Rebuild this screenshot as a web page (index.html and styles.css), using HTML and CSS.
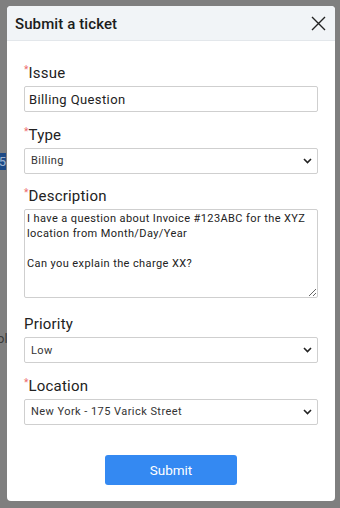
FILE: index.html
```html
<!DOCTYPE html>
<html lang="en">

<head>
    <meta charset="UTF-8">
    <meta name="viewport" content="width=device-width, initial-scale=1.0">
    <link rel="stylesheet" href="styles.css">
    <title>Submit a ticket</title>
</head>

<body>

    <div class="backdrop">
        <span class="bg_badge">5</span>
        <span class="bg_text">ol</span>
    </div>

    <div class="modal">
        <header class="modal_header">
            <h2 class="modal_title">Submit a ticket</h2>
            <button class="close_btn" aria-label="Close">
                <svg width="15" height="15" viewBox="0 0 15 15">
                    <path d="M1 1 L14 14 M14 1 L1 14" stroke="#222" stroke-width="1.4" fill="none" />
                </svg>
            </button>
        </header>

        <form class="modal_body">
            <div class="field">
                <label class="label"><i class="req">*</i>Issue</label>
                <input class="input" type="text" value="Billing Question">
            </div>

            <div class="field">
                <label class="label"><i class="req">*</i>Type</label>
                <div class="select_wrap">
                    <select class="select">
                        <option>Billing</option>
                    </select>
                    <svg class="chevron" width="9" height="6" viewBox="0 0 9 6">
                        <path d="M1 1 L4.5 4.5 L8 1" stroke="#222" stroke-width="1.6" fill="none" />
                    </svg>
                </div>
            </div>

            <div class="field">
                <label class="label"><i class="req">*</i>Description</label>
                <textarea class="textarea">I have a question about Invoice #123ABC for the XYZ location from Month/Day/Year

Can you explain the charge XX?</textarea>
            </div>

            <div class="field">
                <label class="label">Priority</label>
                <div class="select_wrap">
                    <select class="select">
                        <option>Low</option>
                    </select>
                    <svg class="chevron" width="9" height="6" viewBox="0 0 9 6">
                        <path d="M1 1 L4.5 4.5 L8 1" stroke="#222" stroke-width="1.6" fill="none" />
                    </svg>
                </div>
            </div>

            <div class="field">
                <label class="label"><i class="req">*</i>Location</label>
                <div class="select_wrap">
                    <select class="select">
                        <option>New York - 175 Varick Street</option>
                    </select>
                    <svg class="chevron" width="9" height="6" viewBox="0 0 9 6">
                        <path d="M1 1 L4.5 4.5 L8 1" stroke="#222" stroke-width="1.6" fill="none" />
                    </svg>
                </div>
            </div>

            <div class="actions">
                <button type="button" class="submit_btn">Submit</button>
            </div>
        </form>
    </div>

</body>

</html>
```

FILE: styles.css
```css
* {
    margin: 0px;
    padding: 0px;
    box-sizing: border-box;
}

body {
    width: 340px;
    height: 508px;
    background: #7f7f7f;
    font-family: Roboto, "Liberation Sans", sans-serif;
    color: #222222;
    position: relative;
    overflow: hidden;
    padding: 6px 5px 0px 7px;
}

.backdrop {
    position: absolute;
    left: 0px;
    top: 0px;
    width: 7px;
    height: 100%;
}

.bg_badge {
    position: absolute;
    left: -4px;
    top: 153px;
    width: 10px;
    height: 17px;
    background: #1d4a86;
    color: #9fb3cf;
    font-size: 13px;
    line-height: 17px;
    text-align: right;
}

.bg_text {
    position: absolute;
    left: -3px;
    top: 331px;
    color: #3a3a3a;
    font-size: 13px;
}

.modal {
    width: 328px;
    height: 495px;
    background: #ffffff;
    border-radius: 4px;
    overflow: hidden;
    position: relative;
}

.modal_header {
    height: 35px;
    background: #f1f4f7;
    border-bottom: 1px solid #e3e7eb;
    display: flex;
    align-items: center;
    justify-content: space-between;
    padding: 1px 9px 0px 8px;
}

.modal_title {
    font-size: 15px;
    font-weight: 500;
    color: #1c1c1c;
    letter-spacing: 0.1px;
}

.close_btn {
    border: none;
    background: none;
    width: 15px;
    height: 15px;
    display: flex;
}

.modal_body {
    display: flex;
    flex-direction: column;
    padding: 22px 17px 0px 17px;
    gap: 12.5px;
}

.field {
    display: flex;
    flex-direction: column;
    gap: 3px;
}

.label {
    font-size: 15px;
    line-height: 19px;
    padding-top: 1px;
    color: #222222;
    letter-spacing: 0.2px;
}

.req {
    font-style: normal;
    color: #ec6b6b;
    font-size: 10px;
    vertical-align: top;
    line-height: 12px;
}

.input {
    height: 26px;
    border: 1px solid #cfcfcf;
    border-radius: 2px;
    padding: 0px 4px;
    font-family: Roboto, "Liberation Sans", sans-serif;
    font-size: 13px;
    letter-spacing: 0.4px;
    color: #222222;
}

.select_wrap {
    position: relative;
    display: flex;
}

.select {
    appearance: none;
    -webkit-appearance: none;
    width: 100%;
    height: 26px;
    border: 1px solid #cfcfcf;
    border-radius: 2px;
    background: #ffffff;
    padding: 0px 6px;
    font-family: Roboto, "Liberation Sans", sans-serif;
    font-size: 11px;
    letter-spacing: 0.45px;
    color: #333333;
}

.chevron {
    position: absolute;
    right: 6px;
    top: 10px;
    pointer-events: none;
}

.textarea {
    height: 89px;
    border: 1px solid #cfcfcf;
    border-radius: 2px;
    padding: 1px 2px;
    font-family: Roboto, "Liberation Sans", sans-serif;
    font-size: 11px;
    line-height: 15px;
    letter-spacing: 0.4px;
    color: #222222;
    resize: vertical;
    margin-bottom: 3.5px;
}

.actions {
    display: flex;
    justify-content: center;
    padding-top: 17.5px;
}

.submit_btn {
    width: 132px;
    height: 30px;
    background: #3489f2;
    color: #ffffff;
    border: none;
    border-radius: 3px;
    font-family: Roboto, "Liberation Sans", sans-serif;
    font-size: 13.5px;
}
```
